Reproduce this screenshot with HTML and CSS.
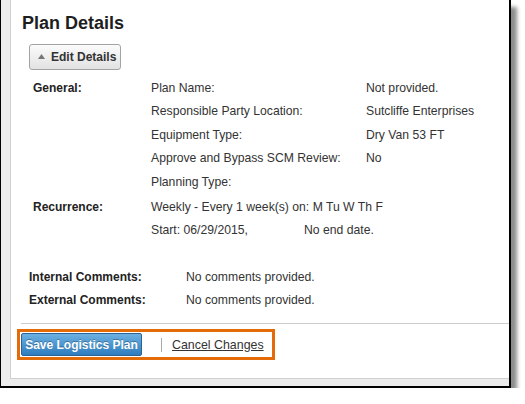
FILE: index.html
```html
<!DOCTYPE html>
<html>
<head>
<meta charset="utf-8">
<link rel="stylesheet" href="styles.css">
</head>
<body>
<div class="frame">
  <div class="main">
    <h1 class="title">Plan Details</h1>
    <button class="edit-btn"><svg class="tri" width="7" height="5" viewBox="0 0 7 5"><polygon points="3.5,0 7,5 0,5" fill="#777"/></svg>Edit Details</button>
    <div class="section general">
      <div class="sec-label">General:</div>
      <div class="pairs">
        <div class="k">Plan Name:</div><div class="v">Not provided.</div>
        <div class="k">Responsible Party Location:</div><div class="v">Sutcliffe Enterprises</div>
        <div class="k">Equipment Type:</div><div class="v">Dry Van 53 FT</div>
        <div class="k">Approve and Bypass SCM Review:</div><div class="v">No</div>
        <div class="k">Planning Type:</div><div class="v"></div>
      </div>
    </div>
    <div class="section recurrence">
      <div class="sec-label">Recurrence:</div>
      <div class="rec">
        <div class="row">Weekly - Every 1 week(s) on: M Tu W Th F</div>
        <div class="row"><span class="start-date">Start: 06/29/2015,</span><span>No end date.</span></div>
      </div>
    </div>
    <div class="comments">
      <div class="ck">Internal Comments:</div><div class="cv">No comments provided.</div>
      <div class="ck">External Comments:</div><div class="cv">No comments provided.</div>
    </div>
    <div class="divider"></div>
    <div class="actions">
      <button class="save">Save Logistics Plan</button>
      <span class="sep"></span>
      <a class="cancel" href="#">Cancel Changes</a>
    </div>
  </div>
</div>
</body>
</html>
```
FILE: styles.css
```css
html, body {
  margin: 0;
  padding: 0;
  background: #ffffff;
}
body {
  font-family: "Liberation Sans", Arial, sans-serif;
  font-size: 12.2px;
  color: #333;
}
.frame {
  width: 511px;
  box-sizing: border-box;
  background: #ececec;
  border-left: 1px solid #000;
  border-right: 2px solid #000;
  border-bottom: 2px solid #000;
  padding-left: 9px;
  padding-bottom: 7px;
  box-shadow: 6px 7px 4px rgba(0, 0, 0, 0.45);
}
.main {
  background: #fff;
  border-left: 1px solid #d0d0d0;
  border-bottom: 1px solid #d0d0d0;
  padding-top: 12px;
  padding-bottom: 18px;
}
.title {
  margin: 0 0 0 11px;
  font-size: 18px;
  line-height: 22px;
  font-weight: bold;
  color: #1e1e1e;
}
.edit-btn {
  display: flex;
  align-items: center;
  margin: 10px 0 0 18px;
  height: 26px;
  width: 92px;
  box-sizing: border-box;
  padding: 0 0 0 8px;
  border: 1px solid #a3a3a3;
  border-radius: 3px;
  background: linear-gradient(#fbfbfb, #e2e2e2);
  font-family: "Liberation Sans", Arial, sans-serif;
  font-size: 12px;
  font-weight: bold;
  color: #333;
}
.tri {
  margin-right: 6px;
  margin-top: -1px;
}
.section {
  display: grid;
  grid-template-columns: 118px 1fr;
  padding-left: 22px;
}
.general {
  margin-top: 6.75px;
}
.recurrence {
  margin-top: 1.5px;
}
.sec-label {
  font-weight: bold;
  font-size: 12px;
  color: #222;
  line-height: 23.5px;
}
.pairs {
  display: grid;
  grid-template-columns: 215px 1fr;
}
.k, .v, .row {
  height: 23.5px;
  line-height: 23.5px;
  white-space: nowrap;
}
.start-date {
  display: inline-block;
  width: 153px;
}
.comments {
  display: grid;
  grid-template-columns: 157px 1fr;
  margin-top: 23px;
  padding-left: 18px;
}
.ck {
  font-weight: bold;
  font-size: 12px;
  color: #222;
  height: 23.5px;
  line-height: 23.5px;
}
.cv {
  height: 23.5px;
  line-height: 23.5px;
}
.divider {
  margin: 10.25px 0 0 10px;
  height: 1px;
  background: #cccccc;
}
.actions {
  display: inline-flex;
  align-items: center;
  margin: 5px 0 0 6px;
  border: 3px solid #e36c09;
  padding: 1px 8px 1px 1px;
}
.save {
  width: 121px;
  height: 23px;
  box-sizing: border-box;
  padding: 0;
  border: 1px solid #2b6396;
  border-radius: 2px;
  background: linear-gradient(#6cb0e2, #2e7dbf);
  color: #fff;
  font-family: "Liberation Sans", Arial, sans-serif;
  font-size: 12px;
  font-weight: bold;
  text-shadow: 0 -1px 0 rgba(0, 0, 0, 0.3);
}
.sep {
  width: 1px;
  height: 14px;
  background: #aaa;
  margin: 0 10px 0 19px;
}
.cancel {
  color: #333;
  text-decoration: underline;
  font-size: 12.4px;
  width: 92px;
  white-space: nowrap;
}
```
